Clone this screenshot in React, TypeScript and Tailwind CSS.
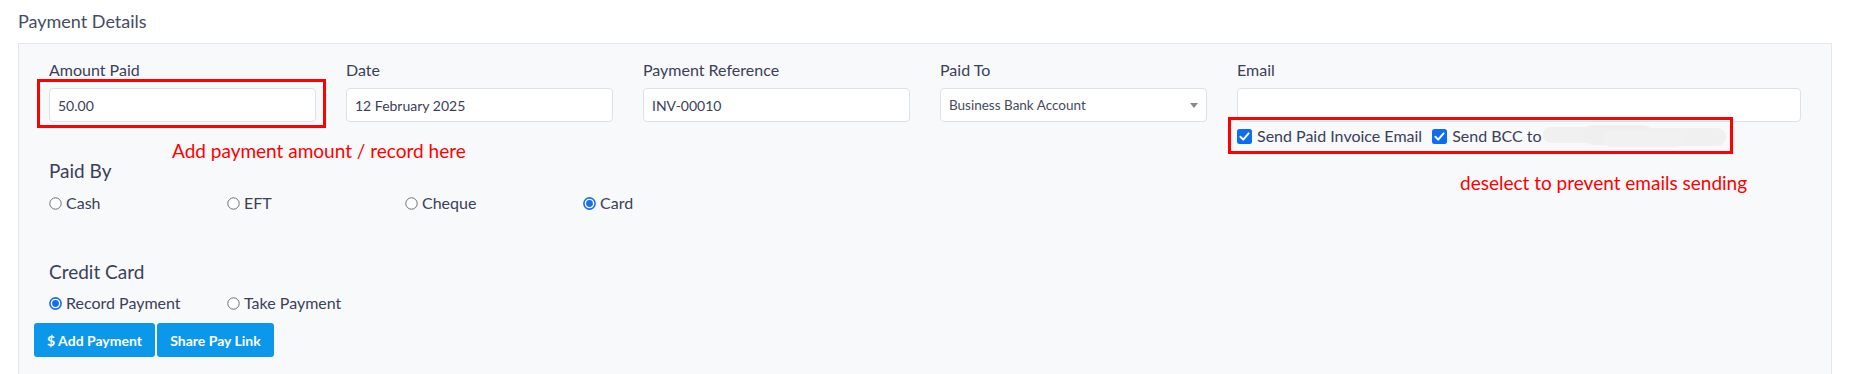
import React from "react";

function Radio({ checked, label }: { checked?: boolean; label: string }) {
  return (
    <div className="flex items-center gap-[4px] h-[20px]">
      <svg width="13" height="13" viewBox="0 0 13 13" className="shrink-0">
        {checked ? (
          <>
            <circle cx="6.5" cy="6.5" r="5.6" fill="#fff" stroke="#1570ef" strokeWidth="1.6" />
            <circle cx="6.5" cy="6.5" r="3.4" fill="#1570ef" />
          </>
        ) : (
          <circle cx="6.5" cy="6.5" r="5.7" fill="#fff" stroke="#6f6f6f" strokeWidth="1" />
        )}
      </svg>
      <span className="text-[16px] leading-[20px] text-[#3b4058]">{label}</span>
    </div>
  );
}

function Check({ label }: { label: string }) {
  return (
    <div className="flex items-center gap-[5px] h-[20px]">
      <svg width="15" height="15" viewBox="0 0 15 15" className="shrink-0">
        <rect x="0" y="0" width="15" height="15" rx="2.5" fill="#0e6cf0" />
        <path d="M3.4 7.8 L6.2 10.6 L11.6 4.4" fill="none" stroke="#fff" strokeWidth="2" strokeLinecap="round" strokeLinejoin="round" />
      </svg>
      <span className="text-[16px] leading-[20px] text-[#3b4058] whitespace-nowrap">{label}</span>
    </div>
  );
}

function Field({ label, value }: { label: string; value: string }) {
  return (
    <div className="flex flex-col">
      <div className="h-[22px] text-[16px] leading-[22px] text-[#3b4058]">{label}</div>
      <div className="mt-[7px] h-[34px] rounded-[4px] border border-[#dde2ea] bg-white px-[8px] flex items-center text-[14px] text-[#3b4058]">
        {value}
      </div>
    </div>
  );
}

export default function App() {
  return (
    <div className="relative w-[1850px] h-[374px] overflow-hidden bg-white font-[Lato,sans-serif]">
      <div className="h-[43px] pl-[18px] pt-[9px] text-[18px] leading-[24px] text-[#464b64]">Payment Details</div>

      <div className="ml-[18px] w-[1814px] h-[340px] border border-[#e4e7ec] bg-[#f8f9fb] pl-[30px] pt-[15px]">
        <div className="grid grid-cols-[267px_267px_267px_267px_564px] gap-x-[30px] items-start">
          <Field label="Amount Paid" value="50.00" />
          <Field label="Date" value="12 February 2025" />
          <Field label="Payment Reference" value="INV-00010" />
          <div className="flex flex-col">
            <div className="h-[22px] text-[16px] leading-[22px] text-[#3b4058]">Paid To</div>
            <div className="mt-[7px] h-[34px] rounded-[4px] border border-[#dde2ea] bg-white pl-[8px] pr-[8px] flex items-center justify-between text-[13.5px] text-[#454a5e]">
              <span>Business Bank Account</span>
              <svg width="8" height="5" viewBox="0 0 8 5">
                <path d="M0 0 L8 0 L4 5 Z" fill="#8a8a8a" />
              </svg>
            </div>
          </div>
          <div className="flex flex-col">
            <div className="h-[22px] text-[16px] leading-[22px] text-[#3b4058]">Email</div>
            <div className="mt-[7px] h-[34px] rounded-[4px] border border-[#dde2ea] bg-white" />
            <div className="mt-[2px] flex items-center gap-[10px]">
              <Check label="Send Paid Invoice Email" />
              <div className="flex items-center">
                <Check label="Send BCC to" />
                <svg width="184" height="24" viewBox="0 0 184 24" className="ml-[1px]">
                  <rect x="0" y="3" width="70" height="16" rx="8" fill="#f0f0f0" />
                  <rect x="40" y="1" width="70" height="20" rx="10" fill="#efefef" />
                  <rect x="95" y="4" width="88" height="18" rx="9" fill="#f0f0f0" />
                  <rect x="60" y="6" width="80" height="17" rx="8" fill="#f1f1f1" />
                </svg>
              </div>
            </div>
          </div>
        </div>

        <div className="mt-[11px] h-[24px] text-[19px] leading-[24px] text-[#3b4058]">Paid By</div>
        <div className="mt-[10px] grid grid-cols-[178px_178px_178px_178px]">
          <Radio label="Cash" />
          <Radio label="EFT" />
          <Radio label="Cheque" />
          <Radio checked label="Card" />
        </div>

        <div className="mt-[47px] h-[24px] text-[19px] leading-[24px] text-[#3b4058]">Credit Card</div>
        <div className="mt-[9px] grid grid-cols-[178px_178px]">
          <Radio checked label="Record Payment" />
          <Radio label="Take Payment" />
        </div>
        <div className="mt-[10px] -ml-[15px] flex gap-[2px]">
          <button className="w-[121px] h-[34px] rounded-[3px] bg-[#0b98eb] text-white text-[14px] font-bold">$ Add Payment</button>
          <button className="w-[117px] h-[34px] rounded-[3px] bg-[#0b98eb] text-white text-[14px] font-bold">Share Pay Link</button>
        </div>
      </div>

      {/* annotations */}
      <div className="absolute left-[37px] top-[79px] w-[289px] h-[49px] border-[3px] border-[#ff0000]" />
      <div className="absolute left-[1228px] top-[117px] w-[505px] h-[37px] border-[3px] border-[#ff0000]" />
      <div className="absolute left-[172px] top-[140px] text-[19px] leading-[22px] text-[#ff0000] whitespace-nowrap">
        Add payment amount / record here
      </div>
      <div className="absolute left-[1460px] top-[172px] text-[19px] leading-[22px] text-[#ff0000] whitespace-nowrap">
        deselect to prevent emails sending
      </div>
    </div>
  );
}
